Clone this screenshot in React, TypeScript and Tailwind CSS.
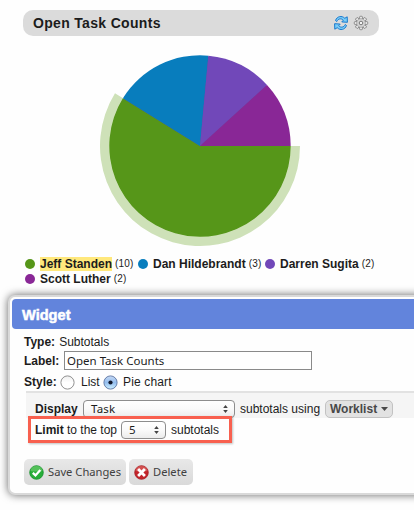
import React from "react";

const slices = [
  { name: "Jeff Standen", count: 10, fill: "#569619" },
  { name: "Dan Hildebrandt", count: 3, fill: "#087dbd" },
  { name: "Darren Sugita", count: 2, fill: "#7148b9" },
  { name: "Scott Luther", count: 2, fill: "#892796" },
];

function wedge(r: number, from: number, to: number) {
  const total = 17;
  const a = (from / total) * Math.PI * 2;
  const b = (to / total) * Math.PI * 2;
  const large = b - a > Math.PI ? 1 : 0;
  return `M100 91 L${100 + r * Math.cos(a)} ${91 + r * Math.sin(a)} A${r} ${r} 0 ${large} 1 ${100 + r * Math.cos(b)} ${91 + r * Math.sin(b)} Z`;
}

function Pie() {
  let start = 0;
  return (
    <svg width="200" height="192" className="ml-[100px] mt-[19px] block shrink-0">
      <path d={wedge(100, 0, 10)} fill="#cee1b8" />
      <circle cx="100" cy="91" r="90" fill="#6b4a9a" />
      {slices.map((s) => {
        const d = wedge(90.7, start, start + s.count);
        start += s.count;
        return <path key={s.name} d={d} fill={s.fill} />;
      })}
    </svg>
  );
}

function Legend({ i, width }: { i: number; width: string }) {
  const s = slices[i];
  return (
    <div className={`flex h-[15px] shrink-0 items-center ${width}`}>
      <svg width="10" height="10" className="mr-[5px] shrink-0">
        <circle cx="5" cy="5" r="5" fill={s.fill} />
      </svg>
      <b className={i === 0 ? "bg-[#ffe87c] leading-[14px]" : "leading-[14px]"}>{s.name}</b>
      <span className="ml-[3px] text-[10px] tracking-[0.15px]">({s.count})</span>
    </div>
  );
}

function Radio({ checked = false }: { checked?: boolean }) {
  return (
    <svg width="15" height="15" viewBox="0 0 15 15" className="shrink-0">
      <defs>
        <linearGradient id="rOff" x2="0" y2="1">
          <stop offset="0" stopColor="#eee" />
          <stop offset=".5" stopColor="#fff" />
          <stop offset="1" stopColor="#fff" />
        </linearGradient>
        <linearGradient id="rOn" x2="0" y2="1">
          <stop offset="0" stopColor="#c8daf4" />
          <stop offset=".5" stopColor="#93bdee" />
          <stop offset="1" stopColor="#cdf0ff" />
        </linearGradient>
      </defs>
      <circle cx="7.5" cy="7.5" r="6.6" fill={checked ? "url(#rOn)" : "url(#rOff)"} stroke={checked ? "#5c75a3" : "#858585"} strokeWidth=".9" />
      {checked && <circle cx="7.5" cy="7.5" r="2.1" fill="#111a2e" />}
    </svg>
  );
}

function Select({ value, width }: { value: string; width: string }) {
  return (
    <div className={`flex h-[18px] shrink-0 items-center rounded-[4px] border border-[#8d8d8d] bg-linear-to-b from-white via-[#fafafa] to-[#ececec] pl-[7px] pr-[6px] font-['Noto_Sans',sans-serif] text-[11.5px] ${width}`}>
      <span className="flex-1 leading-4 tracking-[0.2px]">{value}</span>
      <svg width="5" height="8" viewBox="0 0 5 8">
        <path d="M2.5 0 L4.8 3 H.2Z M2.5 8 L4.8 5 H.2Z" fill="#444" />
      </svg>
    </div>
  );
}

function RefreshIcon() {
  return (
    <svg width="16" height="16" viewBox="0 0 16 16" className="shrink-0">
      <g fill="#79cdf7" stroke="#1878ce" strokeWidth="1" strokeLinejoin="round">
        <path d="M2.5 5.5 C4 1.2 8.8.2 11.8 3.3 L14.2 1.8 L14.4 7.3 L8.8 6.9 L10.3 5.2 C8.1 3 5.3 3.5 3.8 6.5Z" />
        <path d="M13.5 10.5 C12 14.8 7.2 15.8 4.2 12.7 L1.8 14.2 L1.6 8.7 L7.2 9.1 L5.7 10.8 C7.9 13 10.7 12.5 12.2 9.5Z" />
      </g>
    </svg>
  );
}

function GearIcon() {
  return (
    <svg width="16" height="16" viewBox="0 0 16 16" className="shrink-0">
      {[0, 45, 90, 135, 180, 225, 270, 315].map((a) => (
        <rect key={a} x="6.5" y="1.3" width="3" height="4" rx="1" fill="#e4e4e4" stroke="#808080" strokeWidth=".9" transform={`rotate(${a} 8 8)`} />
      ))}
      <circle cx="8" cy="8" r="4.3" fill="#d6d6d6" stroke="#a0a0a0" strokeWidth=".8" />
      <circle cx="8" cy="8" r="1.8" fill="#f4f4f4" stroke="#777" strokeWidth="1" />
    </svg>
  );
}

function CheckIcon() {
  return (
    <svg width="15" height="15" viewBox="0 0 15 15" className="shrink-0">
      <circle cx="7.5" cy="7.5" r="6.8" fill="#27ad38" stroke="#15912b" strokeWidth=".8" />
      <path d="M1.5 6 A6.1 6.1 0 0 1 13.5 6 Q7 7 1.5 6Z" fill="#73cf72" opacity=".6" />
      <path d="M3.8 7.8 L6.5 10.4 L11.3 5" fill="none" stroke="#fff" strokeWidth="2.3" />
    </svg>
  );
}

function CrossIcon() {
  return (
    <svg width="15" height="15" viewBox="0 0 15 15" className="shrink-0">
      <circle cx="7.5" cy="7.5" r="6.8" fill="#c3252b" stroke="#a61c22" strokeWidth=".8" />
      <path d="M1.5 6 A6.1 6.1 0 0 1 13.5 6 Q7 7 1.5 6Z" fill="#e07470" opacity=".55" />
      <path d="M4.1 4.1 L10.9 10.9 M10.9 4.1 L4.1 10.9" stroke="#fff" strokeWidth="2.8" />
    </svg>
  );
}

export default function App() {
  return (
    <div className="flex h-[510px] w-[414px] flex-col overflow-hidden bg-[#fefefe] font-['Liberation_Sans',Arial,sans-serif] text-[12px] leading-4 whitespace-nowrap text-[#1c1c1c]">
      <div className="ml-[23px] mt-[10px] flex h-[26px] w-[356px] shrink-0 items-center rounded-[10px] bg-[#dbdbdb] pl-[10px] pr-[10px]">
        <b className="flex-1 text-[14px] tracking-[0.32px]">Open Task Counts</b>
        <RefreshIcon />
        <span className="w-1" />
        <GearIcon />
      </div>

      <Pie />

      <div className="ml-[25px] mt-[9px] flex h-[30px] shrink-0 flex-wrap">
        <Legend i={0} width="w-[113px]" />
        <Legend i={1} width="w-[127px]" />
        <Legend i={2} width="w-[120px]" />
        <Legend i={3} width="w-[120px]" />
      </div>

      <div className="ml-[8px] mt-[9px] flex h-[200px] w-[430px] shrink-0 flex-col rounded-[7px] border-2 border-[#d9d9d9] bg-[#fefefe] shadow-[0_0_9px_rgba(0,0,0,0.6)]">
        <div className="ml-[2px] mt-[2px] flex h-[30px] shrink-0 items-center rounded-[4px] bg-[#6284dc] pl-[10px] text-[14.6px] font-bold text-white [-webkit-text-stroke:0.5px_white]">
          <span className="mt-[2px]">Widget</span>
        </div>

        <div className="ml-[14px] mt-[5px] flex h-4 shrink-0 items-center gap-[4px]">
          <b>Type:</b>
          <span>Subtotals</span>
        </div>
        <div className="ml-[14px] mt-px flex h-[19px] shrink-0 items-center">
          <b className="w-[40px]">Label:</b>
          <div className="flex h-[19px] w-[248px] items-center border border-[#8a8a8a] bg-white pl-[2px] font-['Noto_Sans',sans-serif] text-[11.5px]">Open Task Counts</div>
        </div>
        <div className="ml-[14px] mt-[4px] flex h-4 shrink-0 items-center">
          <b className="w-[36px]">Style:</b>
          <Radio />
          <span className="ml-[6px] w-[22px]">List</span>
          <Radio checked />
          <span className="ml-[5px] tracking-[0.15px]">Pie chart</span>
        </div>

        <div className="ml-[16px] mt-px flex h-[27px] shrink-0 items-center border-t-2 border-[#e2e2e2] bg-[#f5f5f5] pl-[9px] pt-[7px]">
          <b className="w-[48px]">Display</b>
          <Select value="Task" width="w-[152px]" />
          <span className="ml-[5px] w-[85px]">subtotals using</span>
          <div className="flex h-[18px] w-[68px] items-center rounded-[5px] border border-[#c2c2c2] bg-[#e2e2e2] pl-[4px] font-bold text-[#484848]">
            Worklist
            <svg width="7" height="4" className="ml-[4px]">
              <path d="M0 0H7L3.5 4Z" fill="#484848" />
            </svg>
          </div>
        </div>
        <div className="relative ml-[25px] mt-[3px] flex h-[18px] shrink-0 items-center">
          <div className="absolute -left-[7px] -top-[5px] h-[27px] w-[204px] border-[3px] border-[#f8604f] shadow-[1px_1px_2px_rgba(0,0,0,0.25)]" />
          <b className="w-[28px]">Limit</b>
          <span className="ml-[4px] w-[54px]">to the top</span>
          <Select value="5" width="w-[45px]" />
          <span className="ml-[5px]">subtotals</span>
        </div>

        <div className="ml-[14px] mt-[20px] flex h-[26px] shrink-0 gap-[3px] font-['Noto_Sans',sans-serif] text-[11.2px] text-[#404040]">
          <div className="flex w-[102px] items-center gap-[4px] rounded-[5px] bg-linear-to-b from-[#e8e8e8] to-[#d9d9d9] pl-[5px]">
            <CheckIcon />
            Save Changes
          </div>
          <div className="flex w-[64px] items-center gap-[4px] rounded-[5px] bg-linear-to-b from-[#e8e8e8] to-[#d9d9d9] pl-[5px]">
            <CrossIcon />
            Delete
          </div>
        </div>
      </div>
    </div>
  );
}
